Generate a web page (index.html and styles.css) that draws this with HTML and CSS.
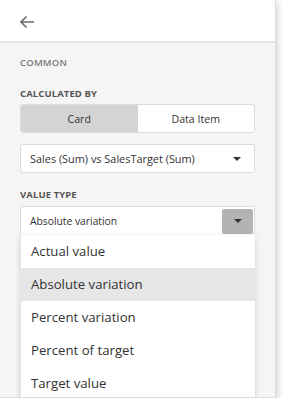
FILE: index.html
```html
<!DOCTYPE html>
<html>
<head>
<meta charset="utf-8">
<link rel="stylesheet" href="styles.css">
</head>
<body>
<div class="panel">
  <div class="header">
    <svg class="back" width="16" height="14" viewBox="0 0 16 14">
      <path d="M15 7H2M7.5 1.5L2 7l5.5 5.5" fill="none" stroke="#6b6b6b" stroke-width="1.6"/>
    </svg>
  </div>
  <div class="content">
    <div class="section-title">COMMON</div>
    <div class="label">CALCULATED BY</div>
    <div class="toggle">
      <div class="opt active">Card</div>
      <div class="opt">Data Item</div>
    </div>
    <div class="select">
      <span>Sales (Sum) vs SalesTarget (Sum)</span>
      <span class="caret"></span>
    </div>
    <div class="label vt">VALUE TYPE</div>
    <div class="select open">
      <span class="small">Absolute variation</span>
      <span class="btn"><span class="caret"></span></span>
    </div>
  </div>
  <ul class="list">
    <li>Actual value</li>
    <li class="hl">Absolute variation</li>
    <li>Percent variation</li>
    <li>Percent of target</li>
    <li>Target value</li>
  </ul>
</div>
</body>
</html>
```
FILE: styles.css
```css
html, body { margin: 0; padding: 0; background: #fff; }
body { font-family: "Segoe UI", "Open Sans", "Noto Sans", sans-serif; color: #333; }
.panel {
  position: relative;
  width: 275px;
  height: 397px;
  background: #f5f5f5;
  border-right: 1px solid #dcdcdc;
  border-bottom: 1px solid #dcdcdc;
  box-shadow: 3px 3px 6px rgba(0,0,0,0.14);
  overflow: hidden;
}
.header {
  height: 41px;
  background: #fff;
  border-bottom: 1px solid #e0e0e0;
  box-shadow: 0 1px 2px rgba(0,0,0,0.06);
  display: flex;
  align-items: center;
  padding-left: 19px;
}
.back { display: block; margin-top: 2px; }
.content { padding: 0 20px; }
.section-title {
  margin-top: 14px;
  font-size: 9.5px;
  font-weight: 600;
  color: #7a7a7a;
  letter-spacing: 0.2px;
  line-height: 13px;
}
.label {
  margin-top: 18px;
  font-size: 9.5px;
  font-weight: 700;
  color: #555;
  line-height: 13px;
  letter-spacing: 0.1px;
}
.toggle {
  margin-top: 4px;
  height: 29px;
  display: flex;
  border: 1px solid #dcdcdc;
  border-radius: 3px;
  overflow: hidden;
  box-sizing: border-box;
  background: #fff;
}
.opt {
  flex: 1;
  display: flex;
  align-items: center;
  justify-content: center;
  font-size: 10.6px;
  color: #333;
}
.opt.active { background: #d4d4d4; }
.select {
  margin-top: 11px;
  height: 29px;
  box-sizing: border-box;
  border: 1px solid #dcdcdc;
  border-radius: 2px;
  background: #fff;
  display: flex;
  align-items: center;
  justify-content: space-between;
  padding: 0 13px 0 9px;
  font-size: 10.9px;
}
.caret {
  width: 0; height: 0;
  border-left: 4px solid transparent;
  border-right: 4px solid transparent;
  border-top: 4px solid #333;
}
.label.vt { margin-top: 15px; }
.select.open {
  margin-top: 5px;
  padding: 0 1px 0 9px;
  border-bottom: none;
  border-radius: 2px 2px 0 0;
}
.select .small { font-size: 10.3px; }
.btn {
  width: 31px;
  height: 25px;
  background: #b3b3b3;
  border-radius: 2px;
  display: flex;
  align-items: center;
  justify-content: center;
}
.list {
  position: absolute;
  left: 20px;
  top: 235px;
  width: 235px;
  margin: 0;
  padding: 0;
  list-style: none;
  background: #fff;
  border-left: 1px solid #e4e4e4;
  box-shadow: 0 2px 6px rgba(0,0,0,0.15);
  box-sizing: border-box;
}
.list li {
  height: 33px;
  line-height: 33px;
  padding-left: 10px;
  font-size: 13.2px;
  color: #333;
}
.list li.hl { background: #e6e6e6; }
```
